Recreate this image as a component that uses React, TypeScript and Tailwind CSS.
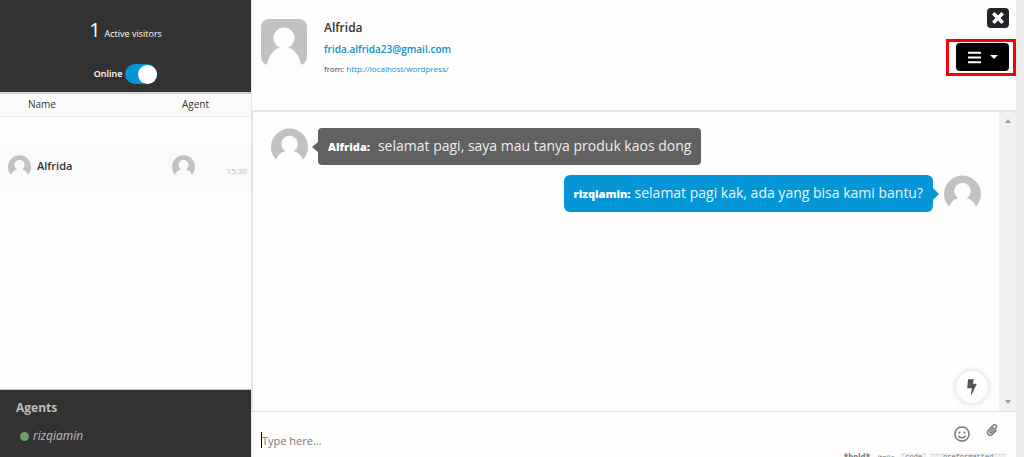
import { useState } from 'react';
import { FaBars, FaPaperclip, FaRegSmile } from 'react-icons/fa';

const visitors = [{ name: 'Alfrida', time: '15:30' }];
const agents = ['rizqiamin'];

function Avatar({ className }: { className: string }) {
  return (
    <svg viewBox="0 0 46 46" className={`block shrink-0 ${className}`} aria-hidden="true">
      <rect width="46" height="46" rx="8" fill="#c2c2c2" />
      <circle cx="23" cy="19" r="10.5" fill="#fefefe" />
      <path d="M6 46C8 35 14 28 23 28s15 7 17 18z" fill="#fefefe" />
    </svg>
  );
}

function RoundAvatar({ className }: { className: string }) {
  return (
    <svg viewBox="0 0 36 36" className={`block shrink-0 ${className}`} aria-hidden="true">
      <path d="M5 31A18 18 0 1 1 31 31Q29 24 22 22.500A8 8 0 1 0 14 22.500Q7 24 5 31z" fill="#c2c2c2" />
    </svg>
  );
}

function Sidebar() {
  const [online, setOnline] = useState(true);

  return (
    <aside className="flex w-[252px] shrink-0 flex-col border-r border-[#e4e4e4] bg-[#fefefe]">
      <div className="flex flex-col items-center border-b-2 border-[#d0d0d0] bg-[#323232] pt-4 pb-2 text-white">
        <p className="flex items-baseline gap-1">
          <span className="text-xl leading-7">1</span>
          <span className="text-[9px] font-medium">Active visitors</span>
        </p>
        <label className="mt-5 flex items-center gap-[3px] text-[9px] font-semibold">
          Online
          <input
            type="checkbox"
            checked={online}
            onChange={(e) => setOnline(e.target.checked)}
            className="peer sr-only"
          />
          <span className="flex h-5 w-8 items-center rounded-full bg-gray-400 peer-checked:justify-end peer-checked:bg-[#0596d7]">
            <span className="size-[19px] rounded-full bg-white" />
          </span>
        </label>
      </div>

      <table className="w-full table-fixed text-left text-[#333]">
        <thead>
          <tr className="h-[22px] border-b border-[#ececec] bg-[#fafafa] text-[10px]">
            <th className="w-[172px] pl-7 font-normal">Name</th>
            <th className="pl-2.5 font-normal">Agent</th>
          </tr>
        </thead>
      </table>
      <ul className="mt-[27px]">
        {visitors.map((visitor) => (
          <li key={visitor.name} className="flex h-[46px] items-center bg-[#fafafa] pr-1 pl-2 shadow-[0_1px_3px_rgba(0,0,0,0.06)]">
            <RoundAvatar className="size-[23px]" />
            <span className="ml-1.5 flex-1 text-[11px] font-semibold text-[#333]">{visitor.name}</span>
            <RoundAvatar className="size-[23px]" />
            <time className="mt-2 ml-8 text-[8px] text-[#b8b8b8]">{visitor.time}</time>
          </li>
        ))}
      </ul>

      <div className="mt-auto border-t border-[#c8c8c8] bg-[#323232] px-4 pt-2 pb-[11px] text-[#bdbdbd]">
        <h2 className="text-xs leading-5 font-bold">Agents</h2>
        {agents.map((agent) => (
          <p key={agent} className="mt-2 flex items-center gap-1 pl-1 text-xs leading-5 italic">
            <span className="size-[9px] rounded-full bg-[#6a9f68]" />
            {agent}
          </p>
        ))}
      </div>
    </aside>
  );
}

function VisitorHeader() {
  return (
    <header className="flex justify-between border-b-2 border-[#e4e4e4] pb-[33px] pl-[9px]">
      <div className="flex gap-[17px] pt-[19px]">
        <Avatar className="size-[46px]" />
        <div>
          <h1 className="text-xs leading-[18px] font-semibold text-[#333]">Alfrida</h1>
          <a href="mailto:frida.alfrida23@gmail.com" className="block text-[10px] leading-6 font-semibold text-[#0b8fd0]">
            frida.alfrida23@gmail.com
          </a>
          <p className="text-[8px] leading-4 text-[#444]">
            from: <a href="http://localhost/wordpress/" className="text-[#0b8fd0]">http://localhost/wordpress/</a>
          </p>
        </div>
      </div>
      <div className="flex flex-col items-end pt-2">
        <button type="button" aria-label="Close" className="mr-[7px] flex h-5 w-[22px] items-center justify-center rounded-sm bg-[#212529] text-white">
          <svg viewBox="0 0 12 12" className="size-3" fill="none" stroke="currentColor" strokeWidth="3.6">
            <path d="M1.300 1.300l9.400 9.400M10.700 1.300l-9.400 9.400" />
          </svg>
        </button>
        <div className="mt-[11px] border-[3px] border-[#fa0006] pt-px pr-1 pb-0.5 pl-[7px]">
          <button type="button" aria-label="Menu" className="flex h-7 w-[53px] items-center justify-center gap-2 rounded bg-black text-white">
            <FaBars className="size-[15px]" />
            <svg viewBox="0 0 8 4" className="h-1 w-2" fill="currentColor">
              <path d="M0 0h8L4 4z" />
            </svg>
          </button>
        </div>
      </div>
    </header>
  );
}

function Conversation() {
  return (
    <section className="flex min-h-0 flex-1 border-b border-[#dfdfdf]">
      <div className="relative flex flex-1 flex-col gap-2.5 border-l border-[#e4e4e4] pt-4 pr-[18px] pl-[18px]">
        <div className="flex items-center">
          <RoundAvatar className="size-[37px]" />
          <span className="ml-1 border-y-[5px] border-r-[6px] border-y-transparent border-r-[#616161]" />
          <p className="rounded bg-[#616161] px-2.5 py-1.5 text-sm leading-6 text-[#ededed]">
            <b className="mr-2 text-[11px] font-extrabold text-white">Alfrida:</b>
            selamat pagi, saya mau tanya produk kaos dong
          </p>
        </div>
        <div className="flex items-center justify-end">
          <p className="rounded-md bg-[#0596d7] px-2.5 py-1.5 text-sm leading-6 text-[#e6f5fc]">
            <b className="mr-1 text-[11px] font-extrabold text-white">rizqiamin:</b>
            selamat pagi kak, ada yang bisa kami bantu?
          </p>
          <span className="mr-[5px] border-y-[6px] border-l-[6px] border-y-transparent border-l-[#0596d7]" />
          <RoundAvatar className="size-[37px]" />
        </div>
        <button
          type="button"
          aria-label="Quick replies"
          className="absolute right-[11px] bottom-2 flex size-8 items-center justify-center rounded-full bg-white text-[#555] shadow-[0_0_6px_rgba(0,0,0,0.18)]"
        >
          <svg viewBox="0 0 10 16" className="h-4 w-2.5" fill="currentColor">
            <path d="M1 .3h5.800L5.800 4.800h4.100L4.600 15.700H3.800l1.100-6.500H.2z" />
          </svg>
        </button>
      </div>
      <div className="flex w-[17px] flex-col items-center justify-between bg-[#f1f1f1] py-[7px] text-[#9a9a9a]">
        <svg viewBox="0 0 6 4" className="h-1 w-1.5" fill="currentColor">
          <path d="M3 0l3 4H0z" />
        </svg>
        <svg viewBox="0 0 6 4" className="h-1 w-1.5" fill="currentColor">
          <path d="M0 0h6L3 4z" />
        </svg>
      </div>
    </section>
  );
}

function Composer() {
  return (
    <form className="h-[45px] shrink-0 pt-3">
      <div className="flex h-[29px] items-start pr-[18px] pl-[9px]">
        <span className="mt-2 h-4 w-px bg-black" />
        <input
          type="text"
          aria-label="Message"
          placeholder="Type here..."
          className="mt-2 flex-1 text-[11px] leading-[18px] outline-none placeholder:text-[#777]"
        />
        <button type="button" aria-label="Emoji" className="mt-0.5 text-[#777]">
          <FaRegSmile className="size-4" />
        </button>
        <button type="button" aria-label="Attach file" className="ml-4 text-[#777]">
          <FaPaperclip className="size-3" />
        </button>
      </div>
      <p className="flex justify-end gap-1 pr-2.5 text-[8px] leading-2 text-[#777]">
        <b>*bold*</b>
        <i>_italic_</i>
        <code className="bg-[#f0f0f0] font-['Liberation_Mono',monospace] text-[7px]">`code`</code>
        <code className="bg-[#f0f0f0] font-['Liberation_Mono',monospace] text-[7px]">```preformatted```</code>
      </p>
    </form>
  );
}

export default function App() {
  return (
    <div className="flex h-screen overflow-hidden bg-[#ebebeb] pr-2 font-['Open_Sans','Noto_Sans',sans-serif]">
      <Sidebar />
      <main className="flex min-w-0 flex-1 flex-col bg-[#fefefe]">
        <VisitorHeader />
        <Conversation />
        <Composer />
      </main>
    </div>
  );
}
